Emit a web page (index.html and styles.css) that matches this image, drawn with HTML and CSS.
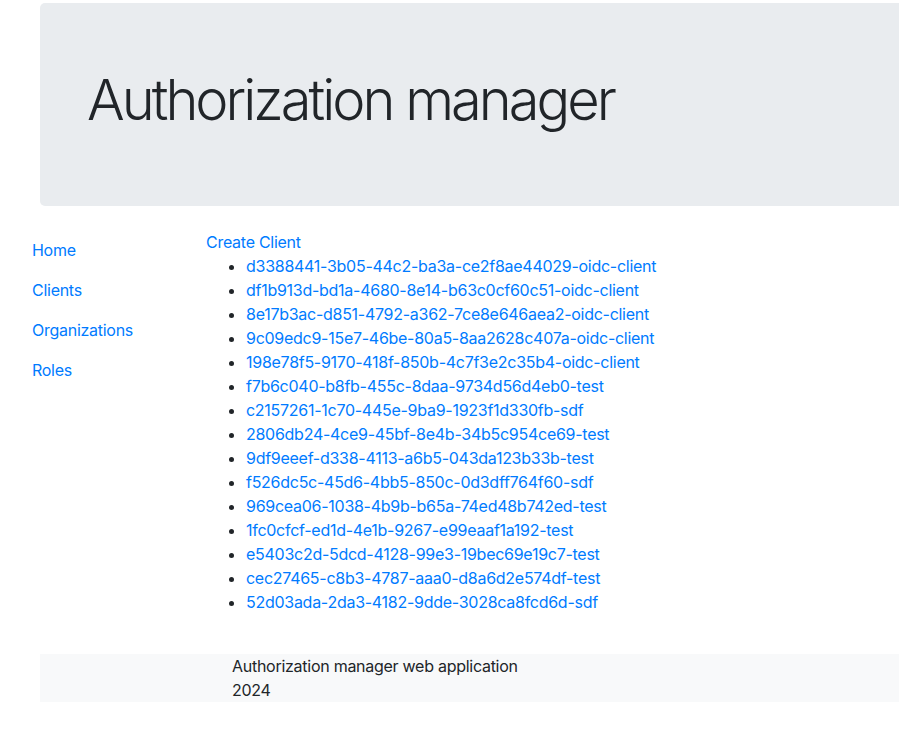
FILE: index.html
```html
<!DOCTYPE html>
<html lang="en">
<head>
<meta charset="utf-8">
<title>Authorization manager</title>
<link rel="stylesheet" href="styles.css">
</head>
<body>
<header class="jumbotron">
  <h1 class="display">Authorization manager</h1>
</header>
<div class="main">
  <nav class="sidebar">
    <ul class="nav">
      <li><a class="nav-link" href="#">Home</a></li>
      <li><a class="nav-link" href="#">Clients</a></li>
      <li><a class="nav-link" href="#">Organizations</a></li>
      <li><a class="nav-link" href="#">Roles</a></li>
    </ul>
  </nav>
  <section class="content">
    <a class="create" href="#">Create Client</a>
    <ul class="clients">
      <li><a href="#">d3388441-3b05-44c2-ba3a-ce2f8ae44029-oidc-client</a></li>
      <li><a href="#">df1b913d-bd1a-4680-8e14-b63c0cf60c51-oidc-client</a></li>
      <li><a href="#">8e17b3ac-d851-4792-a362-7ce8e646aea2-oidc-client</a></li>
      <li><a href="#">9c09edc9-15e7-46be-80a5-8aa2628c407a-oidc-client</a></li>
      <li><a href="#">198e78f5-9170-418f-850b-4c7f3e2c35b4-oidc-client</a></li>
      <li><a href="#">f7b6c040-b8fb-455c-8daa-9734d56d4eb0-test</a></li>
      <li><a href="#">c2157261-1c70-445e-9ba9-1923f1d330fb-sdf</a></li>
      <li><a href="#">2806db24-4ce9-45bf-8e4b-34b5c954ce69-test</a></li>
      <li><a href="#">9df9eeef-d338-4113-a6b5-043da123b33b-test</a></li>
      <li><a href="#">f526dc5c-45d6-4bb5-850c-0d3dff764f60-sdf</a></li>
      <li><a href="#">969cea06-1038-4b9b-b65a-74ed48b742ed-test</a></li>
      <li><a href="#">1fc0cfcf-ed1d-4e1b-9267-e99eaaf1a192-test</a></li>
      <li><a href="#">e5403c2d-5dcd-4128-99e3-19bec69e19c7-test</a></li>
      <li><a href="#">cec27465-c8b3-4787-aaa0-d8a6d2e574df-test</a></li>
      <li><a href="#">52d03ada-2da3-4182-9dde-3028ca8fcd6d-sdf</a></li>
    </ul>
  </section>
</div>
<footer class="footer">
  <div>Authorization manager web application</div>
  <div>2024</div>
</footer>
</body>
</html>
```
FILE: styles.css
```css
html, body {
  margin: 0;
  padding: 0;
}
body {
  font-family: Inter, "Liberation Sans", sans-serif;
  font-size: 16px;
  line-height: 1.5;
  letter-spacing: -0.27px;
  color: #212529;
  background: #fff;
  overflow-x: hidden;
}
a {
  color: #007bff;
  text-decoration: none;
}
.jumbotron {
  margin: 3px 0 0 40px;
  background: #e9ecef;
  border-radius: 5px 0 0 5px;
  padding: 64px 32px;
}
.display {
  margin: 0 0 8px;
  padding-left: 15px;
  font-size: 56px;
  font-weight: 300;
  line-height: 1.2;
  letter-spacing: -3px;
}
.main {
  display: flex;
  margin-top: 24px;
}
.sidebar {
  width: 206px;
  flex: none;
}
.nav {
  list-style: none;
  margin: 0 0 0 16px;
  padding: 0;
}
.nav-link {
  display: block;
  padding: 8px 16px;
}
.content {
  flex: 1;
}
.create {
  display: block;
}
.clients {
  margin: 0 0 16px;
  padding-left: 40px;
}
.footer {
  margin: 24px 0 0 40px;
  background: #f8f9fa;
  padding-left: 192px;
}
```
